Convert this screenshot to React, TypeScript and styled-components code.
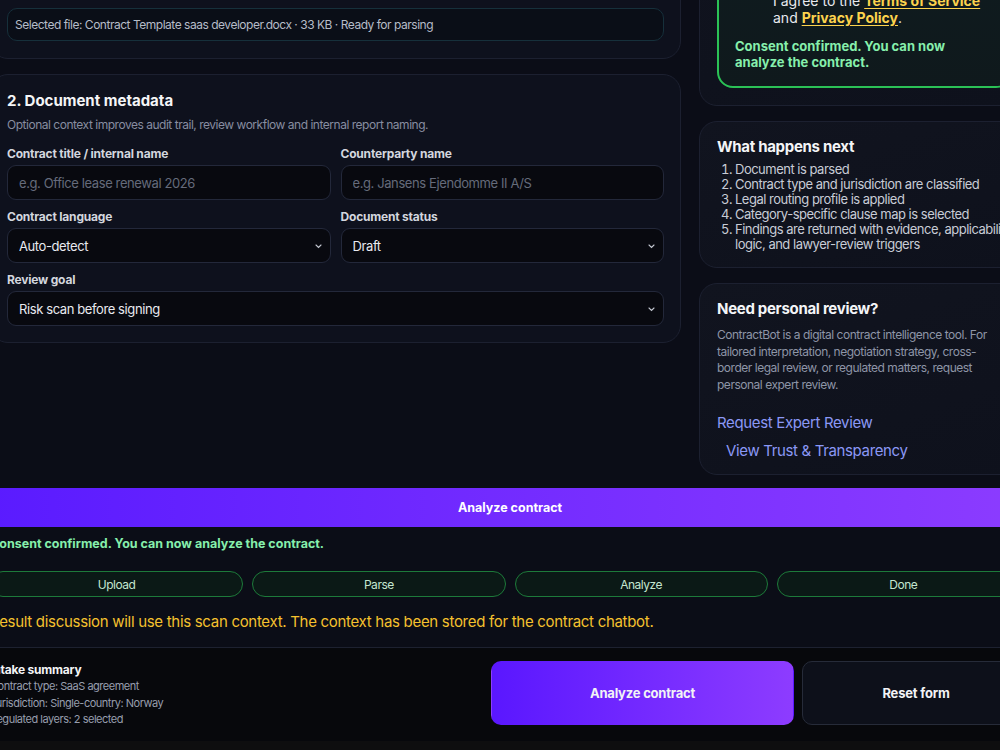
import React from 'react';
import styled, { createGlobalStyle } from 'styled-components';

const GlobalStyle = createGlobalStyle`
  html, body {
    margin: 0;
    padding: 0;
    overflow: hidden;
    background: #0e0e0f;
  }
  body {
    font-family: Inter, "Noto Sans", sans-serif;
    letter-spacing: -0.03em;
    -webkit-font-smoothing: antialiased;
  }
  * { box-sizing: border-box; }
`;

// page is scrolled: part of the top and both sides lie outside the window
const Shell = styled.div`
  width: 1040px;
  margin: -200px 0 0 -10px;
  background: #0b0d17;
`;

const Layout = styled.div`
  display: grid;
  grid-template-columns: 1fr 331px;
  gap: 18px;
  align-items: start;
`;

const Column = styled.div`
  display: flex;
  flex-direction: column;
  gap: 15px;
`;

const Card = styled.section<{ $side?: boolean; $pb?: number }>`
  background: ${p => (p.$side ? 'linear-gradient(160deg, #11141f 0%, #0e111c 100%)' : '#0e111d')};
  border: 1px solid #1c2030;
  border-radius: 18px;
  padding: ${p => (p.$side ? '15px 17px' : '16px')};
  padding-bottom: ${p => (p.$pb ? `${p.$pb}px` : undefined)};
`;

const SectionTitle = styled.h2`
  margin: 0;
  font-size: 15px;
  line-height: 20px;
  font-weight: 700;
  letter-spacing: 0;
  color: #f4f5f7;
`;

const SideTitle = styled(SectionTitle)`
  letter-spacing: -0.3px;
`;

const Subtitle = styled.p`
  margin: 6px 0 0;
  font-size: 12px;
  line-height: 16px;
  color: #878da0;
`;

const Dropzone = styled.div`
  margin-top: 12px;
  height: 147px;
  border: 1px dashed #2a3042;
  border-radius: 14px;
  display: flex;
  align-items: center;
  justify-content: center;
  color: #8a90a2;
  font-size: 13px;
`;

const FileBox = styled.div`
  margin-top: 12px;
  height: 33px;
  padding: 0 7px;
  display: flex;
  align-items: center;
  border: 1px solid #16303b;
  background: #0a0e17;
  border-radius: 10px;
  font-size: 12px;
  color: #b6bcc8;
`;

const FieldGrid = styled.div`
  margin-top: 13px;
  display: grid;
  grid-template-columns: 1fr 1fr;
  gap: 9px 10px;
`;

const Field = styled.label<{ $wide?: boolean }>`
  display: flex;
  flex-direction: column;
  gap: 3px;
  grid-column: ${p => (p.$wide ? '1 / -1' : 'auto')};
`;

const FieldLabel = styled.span`
  font-size: 12px;
  line-height: 16px;
  font-weight: 700;
  letter-spacing: -0.2px;
  color: #d3d6de;
`;

const TextInput = styled.input`
  height: 35px;
  padding: 0 11px;
  background: #08090f;
  border: 1px solid #23283a;
  border-radius: 9px;
  font-family: inherit;
  font-size: 13px;
  letter-spacing: -0.4px;
  color: #e5e7eb;
  outline: none;
  &::placeholder { color: #656b7b; }
`;

const SelectWrap = styled.div`
  position: relative;
`;

const Select = styled.select`
  width: 100%;
  height: 35px;
  padding: 0 11px;
  appearance: none;
  background: #08090f;
  border: 1px solid #23283a;
  border-radius: 9px;
  font-family: inherit;
  font-size: 13px;
  letter-spacing: -0.4px;
  color: #e8eaef;
  outline: none;
`;

const Caret = styled.svg`
  position: absolute;
  right: 9px;
  top: 50%;
  margin-top: -2px;
  pointer-events: none;
`;

const ConsentIntro = styled.p`
  margin: 8px 0 0;
  height: 101px;
  overflow: hidden;
  font-size: 12px;
  line-height: 17px;
  color: #8e95a7;
`;

const GreenBox = styled.div`
  margin-top: 12px;
  border: 2px solid #2bc256;
  border-radius: 16px;
  padding: 16px;
  background: linear-gradient(180deg, #0f1b1f 0%, #0f191c 100%);
`;

const AgreeRow = styled.div`
  display: flex;
  gap: 20px;
  align-items: flex-start;
`;

const Check = styled.span`
  flex: none;
  width: 18px;
  height: 18px;
  border-radius: 4px;
  background: #22c55e;
`;

const AgreeText = styled.span`
  font-size: 14px;
  line-height: 17px;
  letter-spacing: 0;
  color: #e7e9ee;
`;

const LegalLink = styled.a`
  color: #fcd34d;
  font-weight: 700;
  text-decoration: underline;
  text-underline-offset: 2px;
`;

const ConsentOk = styled.p<{ $inline?: boolean }>`
  margin: ${p => (p.$inline ? '9px 0 0' : '12px 0 0')};
  font-size: ${p => (p.$inline ? 12.5 : 13)}px;
  line-height: 16px;
  font-weight: 700;
  letter-spacing: 0;
  color: #86efac;
`;

const Steps = styled.ol`
  margin: 5px 0 0;
  padding-left: 18px;
  font-size: 13px;
  line-height: 15px;
  letter-spacing: -0.5px;
  color: #c8ccd6;
`;

const Body = styled.p`
  margin: 8px 0 0;
  padding-right: 4px;
  font-size: 12px;
  line-height: 16.5px;
  color: #8e95a7;
`;

const TextLink = styled.a<{ $indent?: boolean }>`
  display: block;
  margin: ${p => (p.$indent ? '8px 0 0 9px' : '20px 0 0')};
  font-size: 15px;
  line-height: 20px;
  letter-spacing: -0.35px;
  color: #8b98f5;
  text-decoration: none;
`;

const Banner = styled.button`
  display: block;
  margin-top: 13px;
  width: 100%;
  height: 39px;
  border: 0;
  background: linear-gradient(90deg, #5a1bff 0%, #8c3cff 100%);
  color: #fff;
  font-family: inherit;
  font-size: 12.5px;
  font-weight: 700;
  letter-spacing: 0;
`;

const Progress = styled.div`
  margin-top: 19px;
  display: grid;
  grid-template-columns: repeat(4, 1fr);
  gap: 9px;
`;

const Pill = styled.div`
  height: 26px;
  border: 1px solid #1d7a3a;
  border-radius: 13px;
  background: #0b1916;
  display: flex;
  align-items: center;
  justify-content: center;
  font-size: 12px;
  color: #c4e6d0;
`;

const ResultNote = styled.p`
  margin: 15px 0 0;
  font-size: 15px;
  line-height: 20px;
  letter-spacing: -0.3px;
  color: #f5c12e;
`;

const BottomBar = styled.div`
  margin-top: 15px;
  border-top: 1px solid #1d2130;
  background: #07080c;
  padding: 13px 0;
  display: grid;
  grid-template-columns: 1fr 303px 228px;
  gap: 8px;
`;

const Summary = styled.div`
  display: flex;
  flex-direction: column;
  padding-top: 1px;
`;

const SummaryTitle = styled.strong`
  font-size: 12px;
  line-height: 16px;
  letter-spacing: -0.2px;
  color: #f3f4f6;
`;

const SummaryLine = styled.span`
  font-size: 11px;
  line-height: 16.5px;
  color: #979eae;
`;

const ActionButton = styled.button<{ $primary?: boolean }>`
  height: 64px;
  border-radius: 10px;
  border: 1px solid ${p => (p.$primary ? 'transparent' : '#262b39')};
  background: ${p => (p.$primary ? 'linear-gradient(90deg, #5a17ff 0%, #8d3cff 100%)' : '#0d101a')};
  color: #f2f3f6;
  font-family: inherit;
  font-size: 13px;
  font-weight: 700;
  letter-spacing: -0.2px;
`;

const SelectField = ({ value }: { value: string }) => (
  <SelectWrap>
    <Select defaultValue={value}>
      <option>{value}</option>
    </Select>
    <Caret width="7" height="5" viewBox="0 0 7 5">
      <path d="M1 1l2.5 2.5L6 1" fill="none" stroke="#c3c7d0" strokeWidth="1.1" strokeLinecap="round" />
    </Caret>
  </SelectWrap>
);

const stages = ['Upload', 'Parse', 'Analyze', 'Done'];

export default function App() {
  return (
    <>
      <GlobalStyle />
      <Shell>
        <Layout>
          <Column>
            <Card $pb={17}>
              <SectionTitle>1. Upload contract</SectionTitle>
              <Dropzone>Drop a PDF or DOCX file here, or click to browse</Dropzone>
              <FileBox>Selected file: Contract Template saas developer.docx · 33 KB · Ready for parsing</FileBox>
            </Card>
            <Card>
              <SectionTitle>2. Document metadata</SectionTitle>
              <Subtitle>Optional context improves audit trail, review workflow and internal report naming.</Subtitle>
              <FieldGrid>
                <Field>
                  <FieldLabel>Contract title / internal name</FieldLabel>
                  <TextInput placeholder="e.g. Office lease renewal 2026" />
                </Field>
                <Field>
                  <FieldLabel>Counterparty name</FieldLabel>
                  <TextInput placeholder="e.g. Jansens Ejendomme II A/S" />
                </Field>
                <Field>
                  <FieldLabel>Contract language</FieldLabel>
                  <SelectField value="Auto-detect" />
                </Field>
                <Field>
                  <FieldLabel>Document status</FieldLabel>
                  <SelectField value="Draft" />
                </Field>
                <Field $wide>
                  <FieldLabel>Review goal</FieldLabel>
                  <SelectField value="Risk scan before signing" />
                </Field>
              </FieldGrid>
            </Card>
          </Column>

          <Column>
            <Card $side $pb={17}>
              <SideTitle>Consent</SideTitle>
              <ConsentIntro>
                ContractBot provides automated contract intelligence. Results are informational and do not
                constitute legal advice. Please confirm that you have read and accept the terms before the
                contract is analyzed.
              </ConsentIntro>
              <GreenBox>
                <AgreeRow>
                  <Check />
                  <AgreeText>
                    I have read the consent notice.
                    <br />
                    I agree to the <LegalLink>Terms of Service</LegalLink>
                    <br />
                    and <LegalLink>Privacy Policy</LegalLink>.
                  </AgreeText>
                </AgreeRow>
                <ConsentOk>Consent confirmed. You can now analyze the contract.</ConsentOk>
              </GreenBox>
            </Card>
            <Card $side>
              <SideTitle>What happens next</SideTitle>
              <Steps>
                <li>Document is parsed</li>
                <li>Contract type and jurisdiction are classified</li>
                <li>Legal routing profile is applied</li>
                <li>Category-specific clause map is selected</li>
                <li>Findings are returned with evidence, applicability logic, and lawyer-review triggers</li>
              </Steps>
            </Card>
            <Card $side $pb={13}>
              <SideTitle>Need personal review?</SideTitle>
              <Body>
                ContractBot is a digital contract intelligence tool. For tailored interpretation, negotiation
                strategy, cross-border legal review, or regulated matters, request personal expert review.
              </Body>
              <TextLink href="#">Request Expert Review</TextLink>
              <TextLink href="#" $indent>View Trust &amp; Transparency</TextLink>
            </Card>
          </Column>
        </Layout>

        <Banner>Analyze contract</Banner>
        <ConsentOk $inline>Consent confirmed. You can now analyze the contract.</ConsentOk>
        <Progress>
          {stages.map(s => <Pill key={s}>{s}</Pill>)}
        </Progress>
        <ResultNote>
          Result discussion will use this scan context. The context has been stored for the contract chatbot.
        </ResultNote>

        <BottomBar>
          <Summary>
            <SummaryTitle>Intake summary</SummaryTitle>
            <SummaryLine>Contract type: SaaS agreement</SummaryLine>
            <SummaryLine>Jurisdiction: Single-country: Norway</SummaryLine>
            <SummaryLine>Regulated layers: 2 selected</SummaryLine>
          </Summary>
          <ActionButton $primary>Analyze contract</ActionButton>
          <ActionButton>Reset form</ActionButton>
        </BottomBar>
      </Shell>
    </>
  );
}
